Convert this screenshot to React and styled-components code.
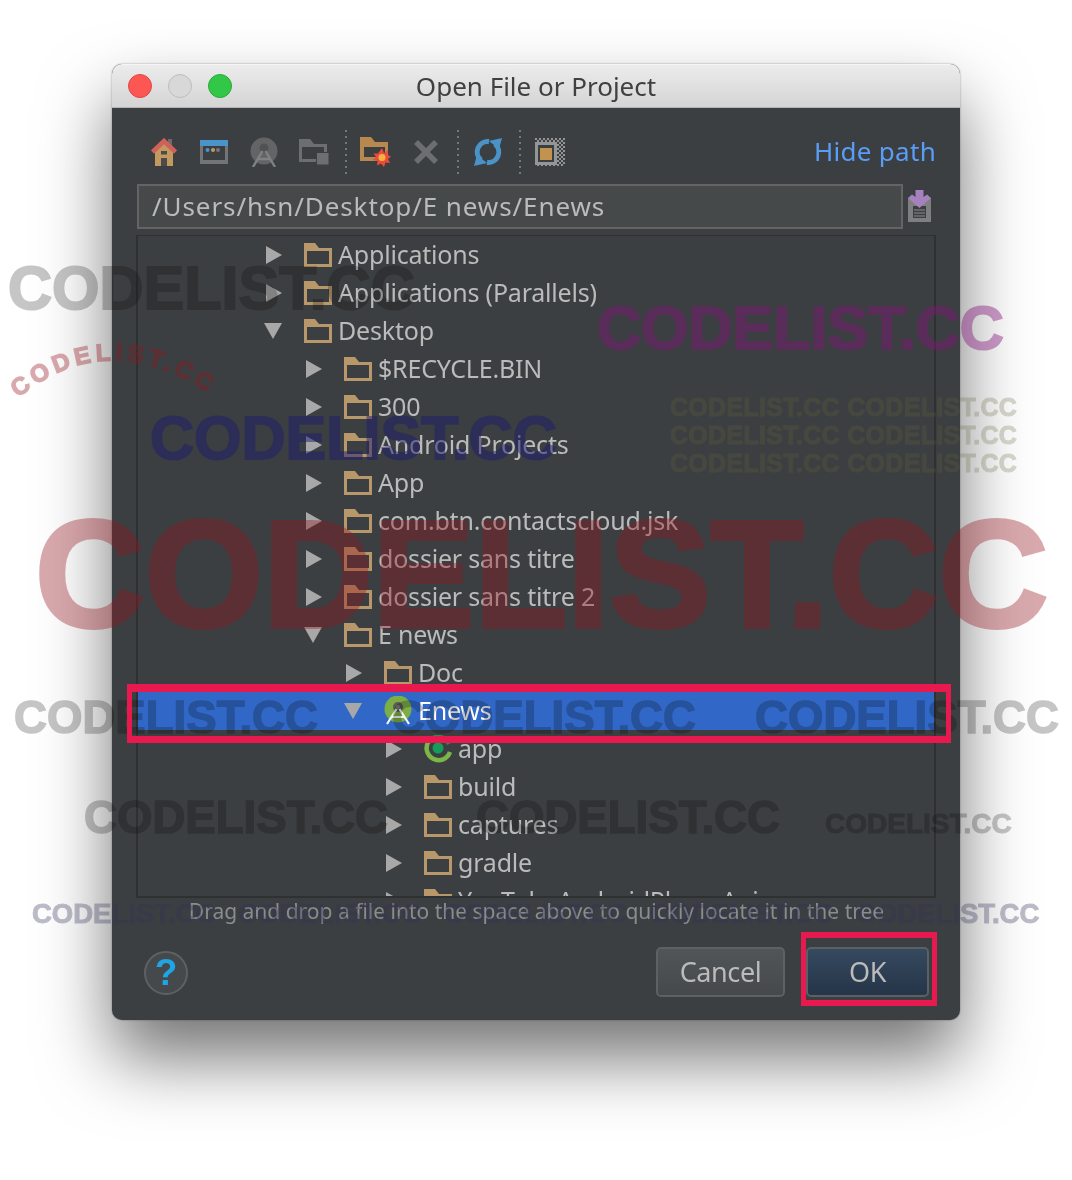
import React from 'react';
import styled, { createGlobalStyle } from 'styled-components';

const UI_FONT = '"Noto Sans", "DejaVu Sans", sans-serif';
const MARK_FONT = '"Liberation Sans", Arial, sans-serif';

const GlobalStyle = createGlobalStyle`
  html, body { margin: 0; padding: 0; background: #fff; }
  body { font-family: ${UI_FONT}; }
`;

const Page = styled.div`
  position: relative;
  width: 1072px;
  height: 1180px;
  padding: 64px 112px 0;
  box-sizing: border-box;
  overflow: hidden;
`;

const Dialog = styled.div`
  width: 848px;
  height: 956px;
  border-radius: 10px;
  overflow: hidden;
  background: #3c3f41;
  box-shadow: 0 38px 70px rgba(0, 0, 0, 0.55), 0 0 2px rgba(0, 0, 0, 0.4);
  display: flex;
  flex-direction: column;
`;

const TitleBar = styled.div`
  height: 44px;
  flex: none;
  box-sizing: border-box;
  position: relative;
  display: flex;
  align-items: center;
  justify-content: center;
  background: linear-gradient(#ececec, #d4d4d4);
  border-top: 1px solid #f6f6f6;
  border-bottom: 1px solid #b4b4b4;
`;

const Lights = styled.div`
  position: absolute;
  left: 16px;
  top: 9px;
  display: flex;
  gap: 16px;
`;

const Light = styled.span`
  width: 24px;
  height: 24px;
  box-sizing: border-box;
  border-radius: 50%;
  background: ${p => p.$color};
  border: 1px solid ${p => p.$edge};
`;

const Title = styled.div`
  font-size: 26px;
  color: #404040;
`;

const Body = styled.div`
  flex: 1;
  display: flex;
  flex-direction: column;
  padding: 22px 24px 0 25px;
`;

const Toolbar = styled.div`
  height: 44px;
  display: flex;
  align-items: center;
  margin-left: 2px;
`;

const Tool = styled.div`
  width: 50px;
  height: 44px;
  display: flex;
  align-items: center;
  justify-content: center;
`;

const ToolSep = styled.div`
  width: 2px;
  height: 44px;
  margin: 0 4px 0 6px;
  background: repeating-linear-gradient(#74777a 0 2px, transparent 2px 6px);
`;

const HidePath = styled.div`
  margin-left: auto;
  margin-bottom: 2px;
  color: #589df6;
  font-size: 26px;
  letter-spacing: 0.3px;
`;

const PathRow = styled.div`
  margin-top: 10px;
  height: 45px;
  display: flex;
  align-items: center;
`;

const PathField = styled.div`
  width: 766px;
  height: 45px;
  box-sizing: border-box;
  border: 2px solid #646464;
  background: #45494a;
  color: #bbbbbb;
  font-size: 26px;
  line-height: 41px;
  padding-left: 13px;
  letter-spacing: 0.9px;
`;

const PathAction = styled.div`
  margin: -2px 0 0 5px;
  display: flex;
`;

const Tree = styled.div`
  margin: 6px 0 0 -1px;
  width: 800px;
  height: 663px;
  box-sizing: border-box;
  border: 2px solid #2f3032;
  border-top-width: 1px;
  overflow: hidden;
`;

const Row = styled.div`
  height: 38px;
  display: flex;
  align-items: center;
  box-sizing: border-box;
  padding-left: ${p => 128 + p.$level * 40}px;
  background: ${p => (p.$selected ? '#3168c8' : 'transparent')};
  color: ${p => (p.$selected ? '#ffffff' : '#bbbbbb')};
  font-size: 25px;
  letter-spacing: -0.2px;
`;

const ArrowSlot = styled.span`
  width: 38px;
  flex: none;
  display: flex;
`;

const IconSlot = styled.span`
  width: 28px;
  height: 28px;
  flex: none;
  margin-right: 6px;
  display: flex;
  align-items: center;
`;

const RowLabel = styled.span`
  padding-bottom: 2px;
`;

const Hint = styled.div`
  height: 26px;
  line-height: 26px;
  text-align: center;
  font-size: 21px;
  color: #8a8d8f;
`;

const Footer = styled.div`
  margin-top: 23px;
  display: flex;
  align-items: center;
  padding: 0 7px 0 7px;
`;

const Help = styled.div`
  width: 44px;
  height: 44px;
  margin-top: 2px;
  box-sizing: border-box;
  border-radius: 50%;
  border: 2px solid #5e6163;
  background: #46494b;
  color: #1ea5e6;
  font: bold 37px/40px ${MARK_FONT};
  text-align: center;
`;

const Button = styled.div`
  width: ${p => p.$width}px;
  height: 50px;
  margin-left: ${p => p.$gap}px;
  box-sizing: border-box;
  border-radius: 5px;
  border: 2px solid ${p => (p.$primary ? '#5a6066' : '#5e6163')};
  background: ${p => (p.$primary ? 'linear-gradient(#35495f, #263548)' : 'linear-gradient(#505557, #46494b)')};
  color: #bbbbbb;
  font-size: 27px;
  letter-spacing: -0.4px;
  line-height: 46px;
  text-align: center;
`;

const Spacer = styled.div`
  flex: 1;
`;

const Mark = styled.div`
  position: absolute;
  left: ${p => p.$x}px;
  top: ${p => p.$y}px;
  font: bold ${p => p.$size}px/1 ${MARK_FONT};
  color: ${p => p.$color};
  -webkit-text-stroke: ${p => p.$stroke || 1}px ${p => p.$color};
  letter-spacing: ${p => p.$track || 0}px;
  white-space: pre;
  opacity: ${p => p.$opacity || 1};
  mix-blend-mode: ${p => p.$blend || 'normal'};
  pointer-events: none;
`;

const ArcMark = styled.svg`
  position: absolute;
  left: 0;
  top: 0;
  opacity: 0.36;
  pointer-events: none;
`;

const RedBox = styled.div`
  position: absolute;
  left: ${p => p.$x}px;
  top: ${p => p.$y}px;
  width: ${p => p.$w}px;
  height: ${p => p.$h}px;
  box-sizing: border-box;
  border: 5px solid #e8194f;
  border-top-width: ${p => p.$top}px;
  border-bottom-width: ${p => p.$bottom}px;
  pointer-events: none;
`;

const RIGHT = (
  <svg width="16" height="18" viewBox="0 0 16 18"><path d="M0 0 L16 9 L0 18 Z" fill="#a8a8a8" /></svg>
);
const DOWN = (
  <svg width="18" height="16" viewBox="0 0 18 16" style={{ marginLeft: -2 }}><path d="M0 0 H18 L9 16 Z" fill="#a8a8a8" /></svg>
);

const Folder = () => (
  <svg width="28" height="24" viewBox="0 0 28 24">
    <path d="M0 0 H11 L15 5 H28 V24 H0 Z" fill="#b8976a" />
    <rect x="3" y="8" width="22" height="13" fill="#3c3f41" />
  </svg>
);

const Android = () => (
  <svg width="28" height="30" viewBox="0 0 28 30">
    <circle cx="14" cy="13" r="13.5" fill="#7cae45" />
    <circle cx="14" cy="11" r="5" fill="#565c50" />
    <circle cx="14" cy="11" r="2" fill="#7d8278" />
    <path d="M12.5 13 L3 28 M15.5 13 L25 28 M7.5 21 H20.5" stroke="#f4f4f4" strokeWidth="2.2" fill="none" />
  </svg>
);

const Module = () => (
  <svg width="28" height="28" viewBox="0 0 28 28">
    <path d="M26 17 A12 12 0 1 1 5 6" stroke="#7ab648" strokeWidth="4.5" fill="none" />
    <path d="M5 6 A12 12 0 0 1 25 9" stroke="#2f8a4e" strokeWidth="4.5" fill="none" />
    <circle cx="14" cy="13" r="5.5" fill="#159c58" />
  </svg>
);

const HomeIcon = () => (
  <svg width="26" height="28" viewBox="0 0 26 28">
    <rect x="17" y="1" width="4" height="9" fill="#6b6b6b" />
    <path d="M4 11 L13 4 L22 11 V28 H4 Z" fill="#c2995f" />
    <path d="M1.5 14 L13 3 L24.5 14" stroke="#d0605a" strokeWidth="4.5" fill="none" />
    <rect x="10" y="13" width="6" height="3.5" fill="#4b4b4b" />
    <rect x="10" y="20" width="6" height="8" fill="#4b4b4b" />
  </svg>
);

const WindowIcon = () => (
  <svg width="28" height="24" viewBox="0 0 28 24">
    <rect x="0" y="0" width="28" height="6" fill="#4a94c9" />
    <path d="M0 6 H28 V24 H0 Z M3 6 V20 H25 V6 Z" fill="#727476" fillRule="evenodd" />
    <circle cx="7.5" cy="10" r="2" fill="#4a94c9" />
    <circle cx="13" cy="10" r="2" fill="#c2995f" />
    <circle cx="18" cy="10" r="2" fill="#777" />
  </svg>
);

const AndroidGrey = () => (
  <svg width="28" height="30" viewBox="0 0 28 30">
    <circle cx="14" cy="14" r="13.5" fill="#626466" />
    <circle cx="14" cy="11" r="4.5" fill="#505254" />
    <path d="M12.5 14 L3 30 M15.5 14 L25 30 M8 22 H20" stroke="#808183" strokeWidth="2.4" fill="none" />
  </svg>
);

const FolderSquareIcon = () => (
  <svg width="30" height="26" viewBox="0 0 30 26">
    <path d="M0 0 H11 L15 5 H28 V23 H0 Z M3 8 V20 H25 V8 Z" fill="#6c6e70" fillRule="evenodd" />
    <rect x="17.5" y="13.5" width="12.5" height="12.5" fill="#6c6e70" stroke="#3c3f41" strokeWidth="1" />
  </svg>
);

const burst = 'M22 11 L24 16 L28 13 L27.5 18 L31 19.5 L28 22 L30 26 L25.5 25.5 L24 30 L21 26.5 L17 28.5 L17.5 24 L13 23 L16 20 L13.5 16.5 L18 16.5 Z';

const NewFolderIcon = () => (
  <svg width="32" height="30" viewBox="0 0 32 30">
    <path d="M0 0 H11 L15 5 H28 V24 H0 Z M4 10 V20 H25 V10 Z" fill="#b8894e" fillRule="evenodd" />
    <path d={burst} fill="#ea4b3c" />
    <circle cx="22" cy="20.5" r="3.5" fill="#f3b33f" />
  </svg>
);

const CrossIcon = () => (
  <svg width="26" height="24" viewBox="0 0 26 24">
    <path d="M3 2 L23 22 M23 2 L3 22" stroke="#6c6e70" strokeWidth="5.5" fill="none" />
  </svg>
);

const RefreshIcon = () => (
  <svg width="28" height="28" viewBox="0 0 28 28">
    <path d="M15 3.5 A10.5 10.5 0 0 0 7 22" stroke="#4a93c6" strokeWidth="5" fill="none" />
    <path d="M13 24.5 A10.5 10.5 0 0 0 21 6" stroke="#4a93c6" strokeWidth="5" fill="none" />
    <path d="M28 0 L15 3 L25 11 Z" fill="#4a93c6" />
    <path d="M0 28 L13 25 L3 17 Z" fill="#4a93c6" />
    <path d="M16 8 L9 21 L12 21 L19 9 Z" fill="#3c3f41" />
  </svg>
);

const MaskIcon = () => (
  <svg width="30" height="28" viewBox="0 0 30 28">
    <defs>
      <pattern id="dither" width="4" height="4" patternUnits="userSpaceOnUse">
        <rect width="2" height="2" fill="#949494" />
        <rect x="2" y="2" width="2" height="2" fill="#949494" />
      </pattern>
    </defs>
    <rect width="30" height="28" fill="url(#dither)" />
    <rect x="0" y="4" width="22" height="23" fill="#939596" />
    <rect x="3" y="7" width="16" height="17" fill="#3c3f41" />
    <rect x="5" y="10" width="12" height="12" fill="#c2924f" />
  </svg>
);

const PathIcon = () => (
  <svg width="23" height="32" viewBox="0 0 23 32">
    <path d="M0 8 H23 V32 H0 Z" fill="#7d7f81" />
    <rect x="5" y="16" width="13" height="12" fill="#3c3f41" />
    <path d="M6 20 H17 M6 23 H17 M6 26 H17" stroke="#8a8c8e" strokeWidth="1" />
    <path d="M7.5 0 H15.5 V7 L19 4.5 L23 8 L11.5 18 L0 8 L4 4.5 L7.5 7 Z" fill="#a581bd" />
  </svg>
);

const rows = [
  { level: 0, label: 'Applications' },
  { level: 0, label: 'Applications (Parallels)' },
  { level: 0, label: 'Desktop', open: true },
  { level: 1, label: '$RECYCLE.BIN' },
  { level: 1, label: '300' },
  { level: 1, label: 'Android Projects' },
  { level: 1, label: 'App' },
  { level: 1, label: 'com.btn.contactscloud.jsk' },
  { level: 1, label: 'dossier sans titre' },
  { level: 1, label: 'dossier sans titre 2' },
  { level: 1, label: 'E news', open: true },
  { level: 2, label: 'Doc' },
  { level: 2, label: 'Enews', open: true, selected: true, icon: 'android' },
  { level: 3, label: 'app', icon: 'module' },
  { level: 3, label: 'build' },
  { level: 3, label: 'captures' },
  { level: 3, label: 'gradle' },
  { level: 3, label: 'YouTubeAndroidPlayerApi' },
];

const rowIcon = icon => {
  if (icon === 'android') return <Android />;
  if (icon === 'module') return <Module />;
  return <Folder />;
};

const grey = { color: '#c6c6c6', blend: 'multiply' };
const red = { color: '#96141e', opacity: 0.36 };
const purple = { color: '#82147a', opacity: 0.42 };
const navy = { color: '#1e1e6e', opacity: 0.5 };
const olive = { color: '#64643c', opacity: 0.25, track: 0.3 };
const faint = { color: '#32325a', opacity: 0.32 };

const marks = [
  { x: 8, y: 258, size: 61, stroke: 2, ...grey },
  { x: 597, y: 298, size: 61, stroke: 2, ...purple },
  { x: 150, y: 408, size: 61, stroke: 2, ...navy },
  { x: 670, y: 395, size: 25, text: 'CODELIST.CC CODELIST.CC', ...olive },
  { x: 670, y: 423, size: 25, text: 'CODELIST.CC CODELIST.CC', ...olive },
  { x: 670, y: 451, size: 25, text: 'CODELIST.CC CODELIST.CC', ...olive },
  { x: 35, y: 498, size: 152, stroke: 4, ...red },
  { x: 14, y: 695, size: 45.6, stroke: 1.5, ...grey },
  { x: 392, y: 695, size: 45.6, stroke: 1.5, ...grey },
  { x: 755, y: 695, size: 45.6, stroke: 1.5, ...grey },
  { x: 84, y: 795, size: 45.6, stroke: 1.5, ...grey },
  { x: 476, y: 795, size: 45.6, stroke: 1.5, ...grey },
  { x: 825, y: 810, size: 28, ...grey },
  { x: 32, y: 900, size: 27.5, ...faint },
  { x: 238, y: 900, size: 27.5, ...faint },
  { x: 444, y: 900, size: 27.5, ...faint },
  { x: 650, y: 900, size: 27.5, ...faint },
  { x: 856, y: 900, size: 27.5, ...faint },
];

export default function App() {
  return (
    <Page>
      <GlobalStyle />
      <Dialog>
        <TitleBar>
          <Lights>
            <Light $color="#fc5753" $edge="#df4744" />
            <Light $color="#d8d8d8" $edge="#bdbdbd" />
            <Light $color="#33c748" $edge="#27aa35" />
          </Lights>
          <Title>Open File or Project</Title>
        </TitleBar>
        <Body>
          <Toolbar>
            <Tool><HomeIcon /></Tool>
            <Tool><WindowIcon /></Tool>
            <Tool><AndroidGrey /></Tool>
            <Tool><FolderSquareIcon /></Tool>
            <ToolSep />
            <Tool><NewFolderIcon /></Tool>
            <Tool><CrossIcon /></Tool>
            <ToolSep />
            <Tool><RefreshIcon /></Tool>
            <ToolSep />
            <Tool><MaskIcon /></Tool>
            <HidePath>Hide path</HidePath>
          </Toolbar>
          <PathRow>
            <PathField>/Users/hsn/Desktop/E news/Enews</PathField>
            <PathAction><PathIcon /></PathAction>
          </PathRow>
          <Tree>
            {rows.map(r => (
              <Row key={r.label} $level={r.level} $selected={r.selected}>
                <ArrowSlot>{r.open ? DOWN : RIGHT}</ArrowSlot>
                <IconSlot>{rowIcon(r.icon)}</IconSlot>
                <RowLabel>{r.label}</RowLabel>
              </Row>
            ))}
          </Tree>
          <Hint>Drag and drop a file into the space above to quickly locate it in the tree</Hint>
          <Footer>
            <Help>?</Help>
            <Spacer />
            <Button $width={129} $gap={0}>Cancel</Button>
            <Button $width={123} $gap={21} $primary>OK</Button>
          </Footer>
        </Body>
      </Dialog>

      {marks.map((m, i) => (
        <Mark
          key={i}
          $x={m.x}
          $y={m.y}
          $size={m.size}
          $color={m.color}
          $stroke={m.stroke}
          $blend={m.blend}
          $opacity={m.opacity}
          $track={m.track}
        >
          {m.text || 'CODELIST.CC'}
        </Mark>
      ))}
      <ArcMark width="260" height="460">
        <defs>
          <path id="arc" d="M18 398 Q 116 318 228 408" />
        </defs>
        <text fontFamily={MARK_FONT} fontWeight="bold" fontSize="24" fill="#96141e" stroke="#96141e" strokeWidth="1.5" letterSpacing="4.5">
          <textPath href="#arc">CODELIST.CC</textPath>
        </text>
      </ArcMark>

      <RedBox $x={127} $y={684} $w={824} $h={59} $top={8} $bottom={7} />
      <RedBox $x={801} $y={932} $w={136} $h={74} $top={6} $bottom={6} />
    </Page>
  );
}
